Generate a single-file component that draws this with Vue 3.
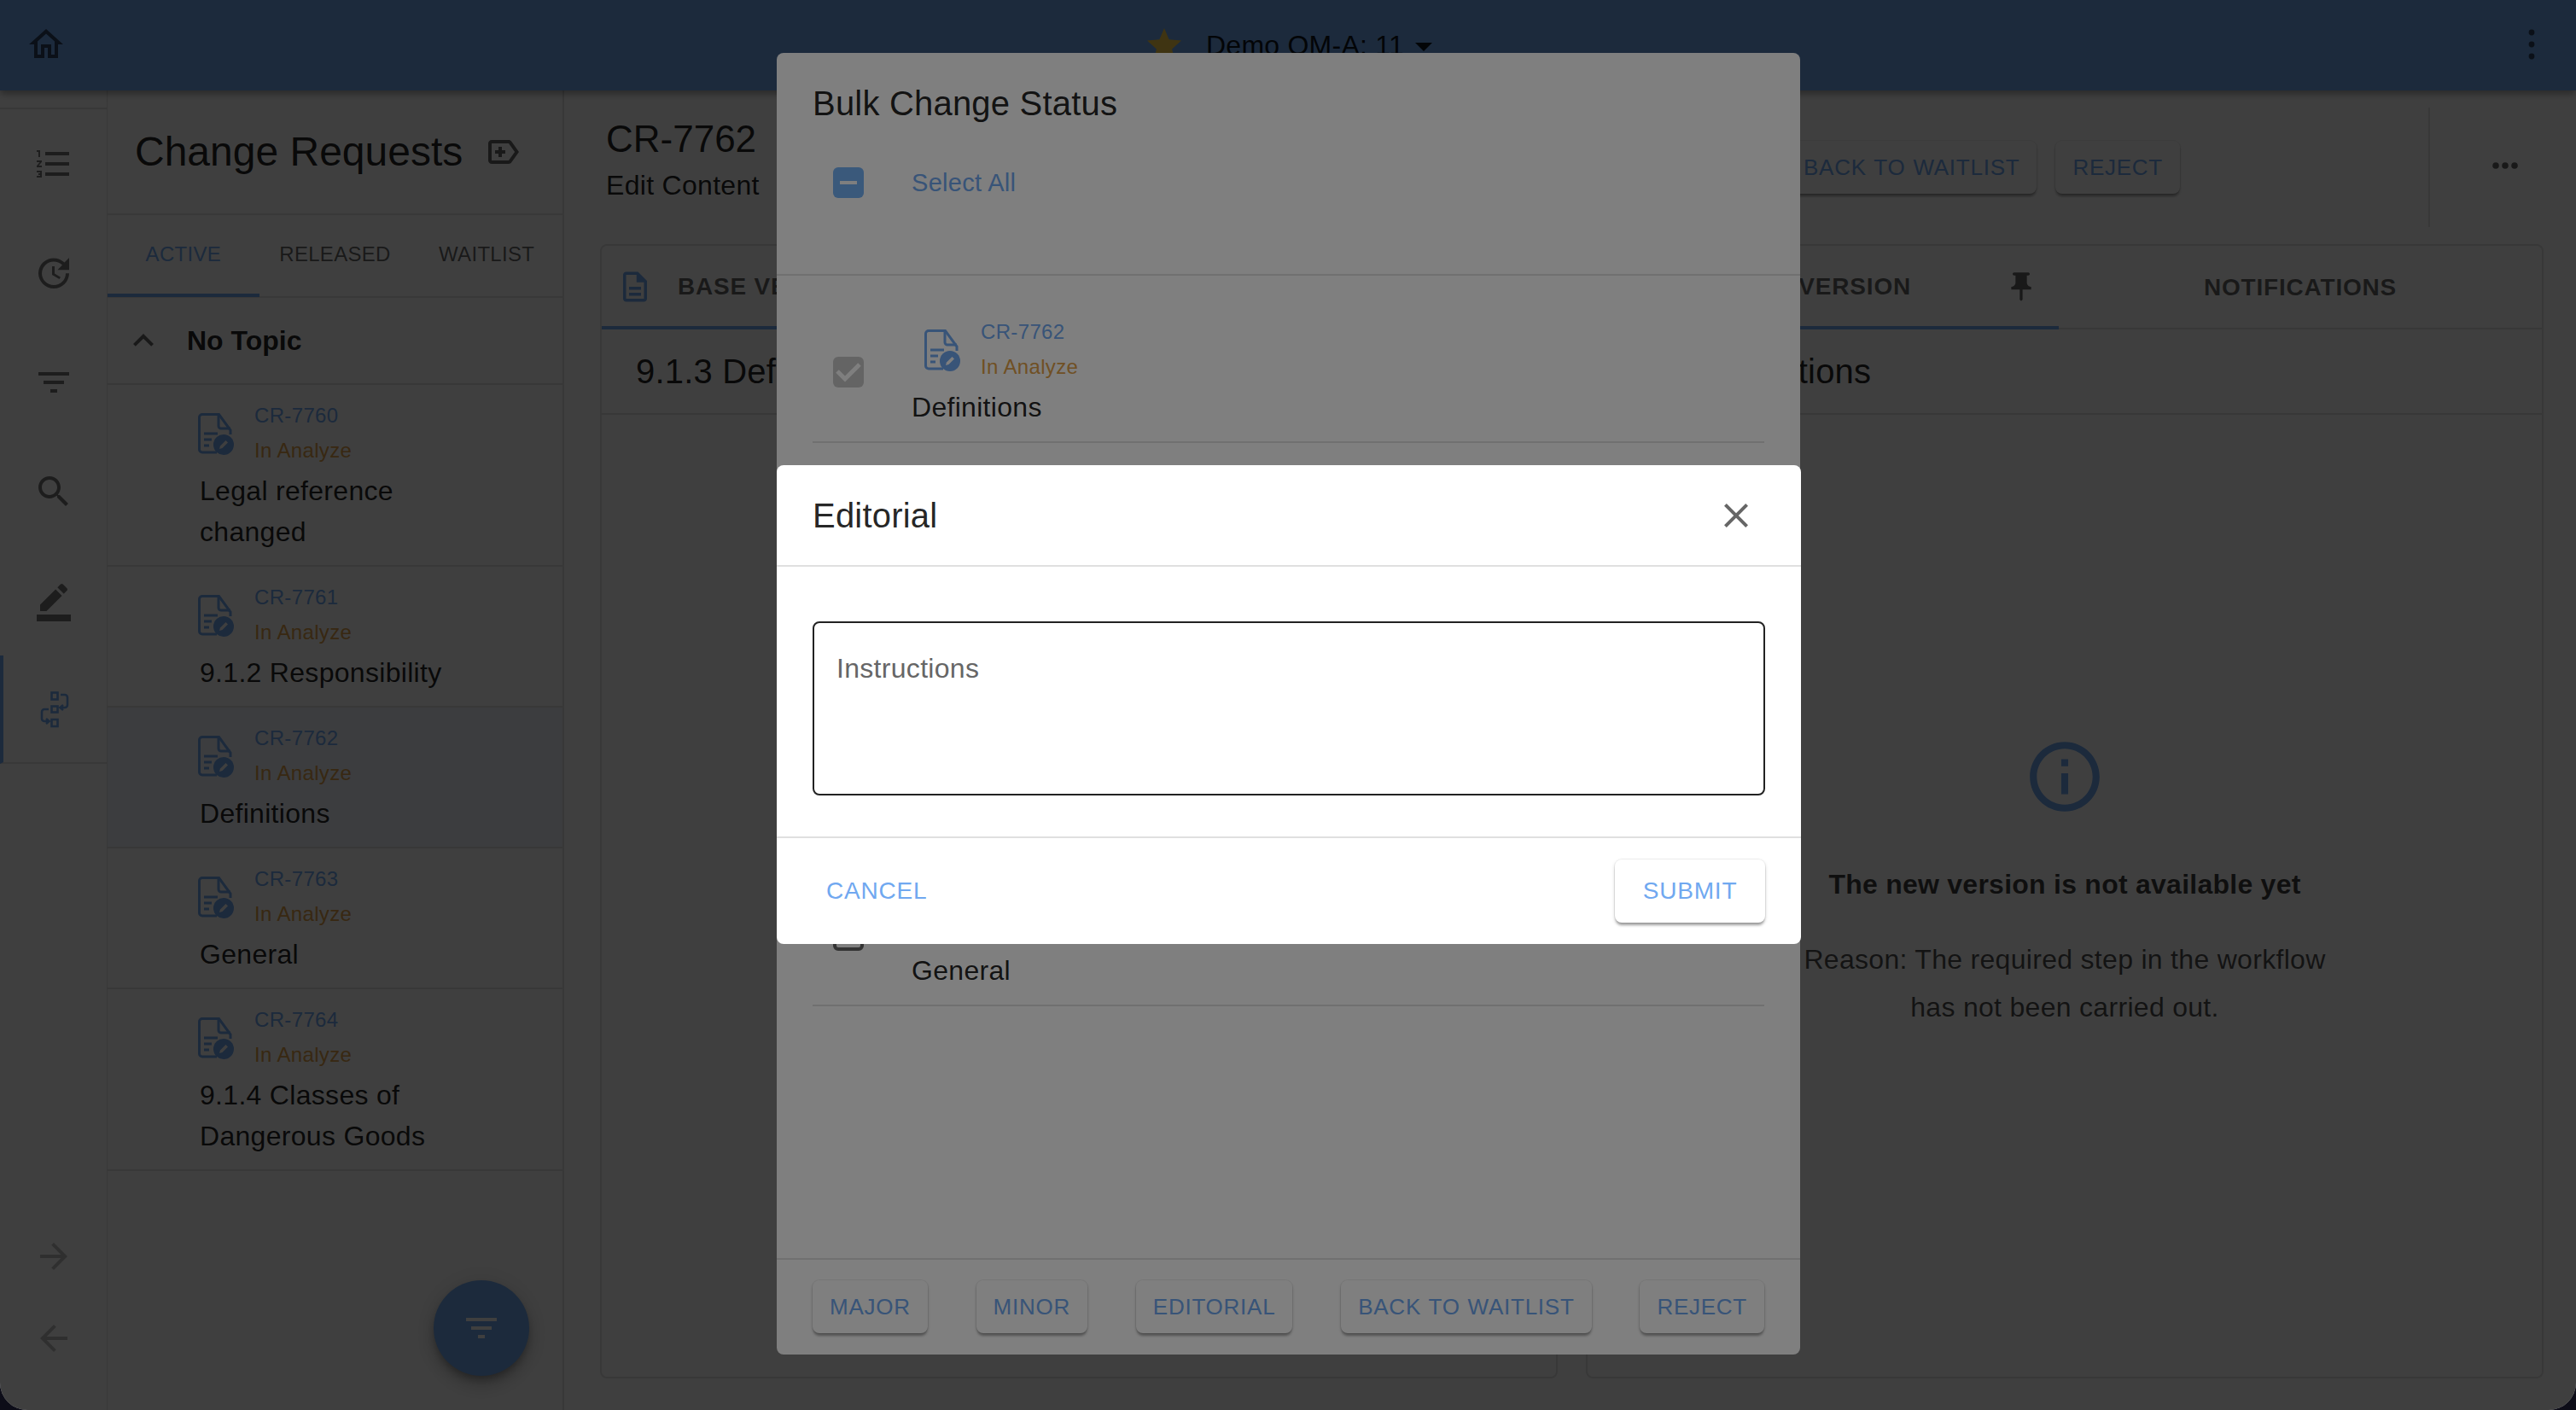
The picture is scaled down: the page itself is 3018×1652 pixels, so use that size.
<script setup>
const railIcons = [
  { d: 'M2 17h2v.5H3v1h1v.5H2v1h3v-4H2v1zm1-9h1V4H2v1h1v3zm-1 3h1.8L2 13.1v.9h3v-1H3.2L5 10.9V10H2v1zm5-6v2h14V5H7zm0 14h14v-2H7v2zm0-6h14v-2H7v2z' },
  { d: 'M21 10.12h-6.78l2.74-2.82c-2.73-2.7-7.15-2.8-9.88-.1-2.73 2.71-2.73 7.08 0 9.79s7.15 2.71 9.88 0C18.32 15.65 19 14.08 19 12.1h2c0 1.98-.88 4.55-2.64 6.29-3.51 3.48-9.21 3.48-12.72 0-3.5-3.47-3.53-9.11-.02-12.58s9.14-3.47 12.65 0L21 3v7.12zM12.5 8v4.25l3.5 2.08-.72 1.21L11 13V8h1.5z' },
  { d: 'M10 18h4v-2h-4v2zM3 6v2h18V6H3zm3 7h12v-2H6v2z' },
  { d: 'M15.5 14h-.79l-.28-.27C15.41 12.59 16 11.11 16 9.5 16 5.91 13.09 3 9.5 3S3 5.91 3 9.5 5.91 16 9.5 16c1.61 0 3.09-.59 4.23-1.57l.27.28v.79l5 4.99L20.49 19l-4.99-5zm-6 0C7.01 14 5 11.99 5 9.5S7.01 5 9.5 5 14 7.01 14 9.5 11.99 14 9.5 14z' },
  { d: 'M22 24H2v-4h20v4zM13.06 5.19l3.75 3.75L7.75 18H4v-3.75l9.06-9.06zm4.82 2.68-3.75-3.75 1.83-1.83c.39-.39 1.02-.39 1.41 0l2.34 2.34c.39.39.39 1.02 0 1.41l-1.83 1.83z' }
]
const requests = [
  { code: 'CR-7760', title: 'Legal reference changed' },
  { code: 'CR-7761', title: '9.1.2 Responsibility' },
  { code: 'CR-7762', title: 'Definitions', selected: true },
  { code: 'CR-7763', title: 'General' },
  { code: 'CR-7764', title: '9.1.4 Classes of Dangerous Goods' }
]
const bulkRows = [
  { code: 'CR-7762', title: 'Definitions', checked: true },
  { code: 'CR-7760', title: 'Legal reference changed' },
  { code: 'CR-7761', title: '9.1.2 Responsibility' },
  { code: 'CR-7764', title: '9.1.4 Classes of Dangerous Goods' },
  { code: 'CR-7763', title: 'General' }
]
const actions = ['MAJOR', 'MINOR', 'EDITORIAL', 'BACK TO WAITLIST', 'REJECT']
</script>

<template>
  <div class="page">
    <header class="topbar">
      <svg class="home" viewBox="0 0 24 24"><path d="M12 5.69l5 4.5V18h-2v-6H9v6H7v-7.81l5-4.5M12 3L2 12h3v8h6v-6h2v6h6v-8h3L12 3z" /></svg>
      <div class="project">
        <svg class="star" viewBox="0 0 24 24"><path d="M12 17.27L18.18 21l-1.64-6.81L22 9.24l-7.19-.61L12 2 9.19 8.63 2 9.24l5.46 4.95L5.82 21z" /></svg>
        <span class="project-name">Demo OM-A: 11</span>
        <span class="caret"></span>
      </div>
      <svg class="kebab" viewBox="0 0 10 40"><circle cx="5" cy="6" r="3.4" /><circle cx="5" cy="20" r="3.4" /><circle cx="5" cy="34" r="3.4" /></svg>
    </header>

    <div class="shell">
      <nav class="rail">
        <div class="rail-top"></div>
        <div v-for="icon in railIcons" :key="icon.d" class="rail-item">
          <svg class="icon48" viewBox="0 0 24 24"><path :d="icon.d" /></svg>
        </div>
        <div class="rail-item rail-active">
          <svg class="icon48 flow" viewBox="0 0 48 48" fill="none">
            <rect x="21.500" y="4.500" width="7" height="8" />
            <rect x="21.500" y="20.500" width="7" height="7" />
            <rect x="21.500" y="36" width="7" height="8" />
            <path d="M32 7h5a3 3 0 0 1 3 3v9a3 3 0 0 1-3 3h-5" />
            <path d="M35 19l-3.500 3 3.500 3" />
            <path d="M18 24h-5a3 3 0 0 0-3 3v8a3 3 0 0 0 3 3h5" />
            <path d="M15 35l3.500 3-3.500 3" />
          </svg>
        </div>
        <div class="rail-bottom">
          <svg class="icon48 faint" viewBox="0 0 24 24"><path d="M12 4l-1.41 1.41L16.17 11H4v2h12.17l-5.58 5.59L12 20l8-8z" /></svg>
          <svg class="icon48 faint" viewBox="0 0 24 24"><path d="M20 11H7.83l5.59-5.59L12 4l-8 8 8 8 1.41-1.41L7.83 13H20v-2z" /></svg>
        </div>
      </nav>

      <aside class="list">
        <div class="list-head">
          <h1 class="list-title">Change Requests</h1>
          <svg class="icon48 label-icon" viewBox="0 0 24 24"><path d="M16.63 5.84C16.27 5.33 15.67 5 15 5H5c-1.1 0-2 .9-2 2v10c0 1.1.9 2 2 2h10c.67 0 1.27-.33 1.63-.84L21 12l-4.37-6.16zM15 17H5V7h10l3.55 5L15 17z" /><path d="M11 9H9v2H7v2h2v2h2v-2h2v-2h-2z" /></svg>
        </div>
        <div class="list-tabs">
          <div class="list-tab tab-on">ACTIVE</div>
          <div class="list-tab">RELEASED</div>
          <div class="list-tab">WAITLIST</div>
        </div>
        <div class="group">
          <svg class="icon48 chevron" viewBox="0 0 24 24"><path d="M12 8l-6 6 1.41 1.41L12 10.83l4.59 4.58L18 14z" /></svg>
          <span class="group-name">No Topic</span>
        </div>
        <div v-for="r in requests" :key="r.code" class="req" :class="{ 'req-on': r.selected }">
          <div class="req-top">
            <svg class="doc" viewBox="0 0 42 49" fill="none">
              <path class="doc-line" d="M22 46H5a3.500 3.500 0 0 1-3.500-3.500V5A3.500 3.500 0 0 1 5 1.500h19.500L38 20v5" />
              <path class="doc-line" d="M24 2v13a3 3 0 0 0 3 3h11" />
              <path class="doc-line" d="M7 24h16M7 31h9M7 38h6" />
              <circle class="doc-badge" cx="30" cy="37" r="12" />
              <path class="doc-pen" d="M25 42l1-3.500 6.500-6.500 2.500 2.500-6.500 6.500z" />
            </svg>
            <div class="req-meta">
              <div class="req-code">{{ r.code }}</div>
              <div class="req-state">In Analyze</div>
            </div>
          </div>
          <div class="req-title">{{ r.title }}</div>
        </div>
        <button class="fab">
          <svg class="icon48 fab-icon" viewBox="0 0 24 24"><path d="M10 18h4v-2h-4v2zM3 6v2h18V6H3zm3 7h12v-2H6v2z" /></svg>
        </button>
      </aside>

      <main class="main">
        <div class="head">
          <div class="head-title">
            <div class="cr-name">CR-7762</div>
            <div class="cr-sub">Edit Content</div>
          </div>
          <div class="head-actions">
            <button v-for="a in actions" :key="a" class="btn">{{ a }}</button>
          </div>
          <div class="head-rule"></div>
          <div class="head-more">
            <svg class="dots" viewBox="0 0 32 10"><circle cx="5" cy="5" r="3.800" /><circle cx="16" cy="5" r="3.800" /><circle cx="27" cy="5" r="3.800" /></svg>
          </div>
        </div>
        <div class="panes">
          <section class="pane">
            <div class="pane-tabs">
              <div class="pane-tab pane-tab-on">
                <svg class="pane-doc" viewBox="0 0 24 24"><path d="M8 16h8v2H8zm0-4h8v2H8zm6-10H6c-1.100 0-2 .9-2 2v16c0 1.100.89 2 1.990 2H18c1.100 0 2-.9 2-2V8l-6-6zm4 18H6V4h7v5h5v11z" /></svg>
                <span>BASE VERSION</span>
              </div>
            </div>
            <div class="pane-heading">9.1.3 Definitions</div>
          </section>
          <section class="pane">
            <div class="pane-tabs">
              <div class="pane-tab pane-tab-on right-tab">
                <span>NEW VERSION</span>
                <svg class="pin" viewBox="0 0 24 24"><path d="M16 9V4h1c.55 0 1-.45 1-1s-.45-1-1-1H7c-.55 0-1 .45-1 1s.45 1 1 1h1v5c0 1.660-1.340 3-3 3v2h5.970v7l1 1 1-1v-7H19v-2c-1.660 0-3-1.340-3-3z" /></svg>
              </div>
              <div class="pane-tab notif">NOTIFICATIONS</div>
            </div>
            <div class="pane-heading heading-right">9.1.3 Definitions</div>
            <div class="notice">
              <svg class="info" viewBox="0 0 24 24"><path d="M11 7h2v2h-2zm0 4h2v6h-2zm1-9C6.480 2 2 6.480 2 12s4.480 10 10 10 10-4.480 10-10S17.520 2 12 2zm0 18c-4.410 0-8-3.590-8-8s3.590-8 8-8 8 3.590 8 8-3.590 8-8 8z" /></svg>
              <div class="notice-title">The new version is not available yet</div>
              <div class="notice-text">Reason: The required step in the workflow<br />has not been carried out.</div>
            </div>
          </section>
        </div>
      </main>
    </div>

    <div class="backdrop bulk-backdrop">
      <div class="bulk">
        <div class="bulk-title">Bulk Change Status</div>
        <div class="select-all">
          <span class="check check-mixed"><span class="dash"></span></span>
          <span class="select-label">Select All</span>
        </div>
        <div class="bulk-list">
          <div v-for="row in bulkRows" :key="row.code" class="bulk-row">
            <span class="check" :class="row.checked ? 'check-on' : 'check-off'">
              <svg v-if="row.checked" class="tick" viewBox="0 0 36 36" fill="none"><path d="M5 17l9 9L31 9" /></svg>
            </span>
            <div class="bulk-body">
              <div class="req-top bulk-top">
                <svg class="doc" viewBox="0 0 42 49" fill="none">
                  <path class="doc-line" d="M22 46H5a3.500 3.500 0 0 1-3.500-3.500V5A3.500 3.500 0 0 1 5 1.500h19.500L38 20v5" />
                  <path class="doc-line" d="M24 2v13a3 3 0 0 0 3 3h11" />
                  <path class="doc-line" d="M7 24h16M7 31h9M7 38h6" />
                  <circle class="doc-badge" cx="30" cy="37" r="12" />
                  <path class="doc-pen" d="M25 42l1-3.500 6.500-6.500 2.500 2.500-6.500 6.500z" />
                </svg>
                <div class="req-meta">
                  <div class="req-code">{{ row.code }}</div>
                  <div class="req-state">In Analyze</div>
                </div>
              </div>
              <div class="req-title bulk-name">{{ row.title }}</div>
            </div>
          </div>
        </div>
        <div class="bulk-foot">
          <button v-for="a in actions" :key="a" class="btn">{{ a }}</button>
        </div>
      </div>
    </div>

    <div class="backdrop edit-backdrop">
      <div class="edit">
        <div class="edit-head">
          <div class="edit-title">Editorial</div>
          <svg class="icon48 close" viewBox="0 0 24 24"><path d="M19 6.410L17.590 5 12 10.590 6.410 5 5 6.410 10.590 12 5 17.590 6.410 19 12 13.410 17.590 19 19 17.590 13.410 12z" /></svg>
        </div>
        <div class="edit-body">
          <textarea class="instructions" placeholder="Instructions"></textarea>
        </div>
        <div class="edit-foot">
          <button class="text-btn">CANCEL</button>
          <button class="submit">SUBMIT</button>
        </div>
      </div>
    </div>
  </div>
</template>

<style>
html, body { margin: 0; background: #0d0d18; }
</style>

<style scoped>
* { box-sizing: border-box; }
.page {
  position: relative; width: 3018px; height: 1652px; overflow: hidden;
  background: #fff; border-radius: 0 0 32px 32px; color: rgba(0,0,0,.87);
  font-family: "Liberation Sans", Arial, sans-serif;
  display: flex; flex-direction: column;
}
button { font-family: inherit; border: 0; cursor: pointer; }

.topbar {
  height: 106px; flex: none; background: #70a8f0; position: relative; z-index: 2;
  display: flex; align-items: center; justify-content: center;
  box-shadow: 0 4px 8px rgba(0,0,0,.35);
}
.home { position: absolute; left: 30px; top: 28px; width: 48px; height: 48px; fill: rgba(0,0,0,.6); }
.project { display: flex; align-items: center; margin-left: 0; }
.star { width: 48px; height: 48px; fill: #ffd24a; margin-right: 25px; }
.project-name { font-size: 32px; line-height: 40px; color: rgba(0,0,0,.9); letter-spacing: .25px; }
.caret { width: 0; height: 0; margin-left: 13px; margin-top: 4px; border: solid transparent; border-width: 10px 10px 0; border-top-color: rgba(0,0,0,.87); }
.kebab { position: absolute; left: 2961px; top: 32px; width: 10px; height: 40px; fill: rgba(0,0,0,.6); }

.shell { flex: 1; display: flex; min-height: 0; }

.rail { width: 126px; flex: none; border-right: 1px solid #e0e0e0; display: flex; flex-direction: column; }
.rail-top { height: 22px; border-bottom: 2px solid #e0e0e0; flex: none; }
.rail-item { height: 128px; flex: none; display: flex; align-items: center; justify-content: center; }
.rail-active { height: 127px; border-left: 4px solid #70a8f0; border-bottom: 2px solid #e0e0e0; padding-right: 4px; }
.icon48 { width: 48px; height: 48px; flex: none; fill: rgba(0,0,0,.54); }
.flow { stroke: #70a8f0; stroke-width: 2.600; fill: none; }
.rail-bottom { margin-top: auto; padding-bottom: 60px; display: flex; flex-direction: column; align-items: center; gap: 48px; }
.faint { fill: rgba(0,0,0,.25); }

.list { position: relative; width: 535px; flex: none; border-right: 2px solid #e0e0e0; }
.list-head { height: 146px; padding-left: 32px; display: flex; align-items: center; gap: 24px; border-bottom: 2px solid #e0e0e0; }
.list-title { margin: 0; font-size: 48px; font-weight: 400; white-space: nowrap; line-height: 60px; }
.label-icon { fill: rgba(0,0,0,.6); }
.list-tabs { height: 97px; display: grid; grid-template-columns: repeat(3, 1fr); border-bottom: 2px solid #e0e0e0; }
.list-tab { font-size: 24px; letter-spacing: .3px; color: rgba(0,0,0,.6); display: flex; align-items: center; justify-content: center; padding-bottom: 4px; }
.tab-on { color: #70a8f0; border-bottom: 4px solid #70a8f0; margin-bottom: -1px; padding-bottom: 0; }
.group { height: 102px; display: flex; align-items: center; padding-left: 18px; gap: 27px; border-bottom: 2px solid #e0e0e0; }
.chevron { fill: rgba(0,0,0,.6); }
.group-name { font-size: 32px; font-weight: 700; }

.req { padding: 15px 90px 15px 106px; border-bottom: 2px solid #e0e0e0; }
.req-on { background: #f0f6ff; }
.req-top { display: flex; gap: 24px; }
.doc { width: 42px; height: 49px; flex: none; margin-top: 18px; }
.doc-line { stroke: #70a8f0; stroke-width: 3; }
.doc-badge { fill: #70a8f0; }
.doc-pen { fill: #fff; }
.req-meta { font-size: 24px; line-height: 41px; letter-spacing: .35px; }
.req-code { color: #70a8f0; }
.req-state { color: #e0a048; }
.req-title { font-size: 32px; line-height: 48px; margin: 3px 0 0 2px; letter-spacing: .3px; }

.fab {
  position: absolute; left: 382px; bottom: 40px; width: 112px; height: 112px; padding: 0;
  border-radius: 50%; background: #70a8f0; display: flex; align-items: center; justify-content: center;
  box-shadow: 0 6px 10px -2px rgba(0,0,0,.3), 0 12px 20px rgba(0,0,0,.14), 0 2px 36px rgba(0,0,0,.12);
}
.fab-icon { fill: #fff; }

.main { flex: 1; min-width: 0; display: flex; flex-direction: column; }
.head { height: 180px; flex: none; display: flex; align-items: center; }
.head-title { padding: 0 0 12px 49px; }
.cr-name { font-size: 44px; line-height: 54px; }
.cr-sub { font-size: 32px; line-height: 54px; letter-spacing: .3px; }
.head-actions { margin-left: auto; display: flex; gap: 22px; }
.btn {
  height: 62px; padding: 0 20px; background: #fff; color: #70a8f0; border-radius: 8px;
  font-size: 26px; letter-spacing: .75px; word-spacing: 1px; white-space: nowrap;
  box-shadow: 0 0 0 1px rgba(0,0,0,.06), 0 4px 3px -1px rgba(0,0,0,.28), 0 2px 4px rgba(0,0,0,.14);
}
.head-rule { width: 2px; height: 140px; background: #e0e0e0; margin-left: 291px; }
.head-more { width: 171px; padding-left: 4px; display: flex; justify-content: center; align-items: center; }
.dots { width: 32px; height: 10px; fill: rgba(0,0,0,.6); margin-top: -4px; }

.panes { flex: 1; min-height: 0; display: grid; grid-template-columns: 1122px 1122px; gap: 33px; padding: 0 0 37px 42px; }
.pane { border: 2px solid #e0e0e0; border-radius: 8px; display: flex; flex-direction: column; }
.pane-tabs { height: 98px; flex: none; display: flex; border-bottom: 2px solid #e0e0e0; }
.pane-tab { font-size: 28px; font-weight: 700; letter-spacing: .8px; color: rgba(0,0,0,.6); display: flex; align-items: center; padding-top: 2px; }
.pane-tab-on { border-bottom: 4px solid #70a8f0; margin-bottom: -2px; }
.pane-tab-on:first-child { width: 552px; }
.pane-doc { width: 42px; height: 42px; fill: #70a8f0; margin: 0 29px 0 18px; }
.right-tab { justify-content: flex-end; padding-right: 24px; gap: 109px; }
.pin { width: 40px; height: 40px; fill: rgba(0,0,0,.6); }
.notif { flex: 1; justify-content: center; }
.pane-heading { height: 100px; flex: none; padding-left: 40px; font-size: 40px; line-height: 98px; letter-spacing: .2px; border-bottom: 2px solid #e0e0e0; }
.heading-right { padding-left: 42px; }
.notice { flex: 1; display: flex; flex-direction: column; align-items: center; padding-top: 375px; }
.info { width: 98px; height: 98px; fill: #70a8f0; }
.notice-title { margin-top: 57px; font-size: 32px; line-height: 40px; font-weight: 700; color: rgba(0,0,0,.75); letter-spacing: .25px; }
.notice-text { margin-top: 40px; font-size: 32px; line-height: 56px; text-align: center; color: rgba(0,0,0,.7); letter-spacing: .3px; }

.backdrop { position: absolute; inset: 0; background: rgba(0,0,0,.5); z-index: 5; }
.edit-backdrop { z-index: 6; }

.bulk {
  position: absolute; left: 910px; top: 62px; width: 1199px; height: 1525px; background: #fff; border-radius: 8px;
  display: flex; flex-direction: column;
}
.bulk-title { padding: 29px 42px 0; font-size: 40px; line-height: 60px; flex: none; letter-spacing: .2px; }
.select-all { margin-top: 27px; height: 72px; padding-left: 66px; display: flex; align-items: center; gap: 56px; flex: none; }
.check { width: 36px; height: 36px; border-radius: 6px; flex: none; display: flex; align-items: center; justify-content: center; }
.check-mixed { background: #74b2f6; }
.dash { width: 20px; height: 4px; background: #fff; }
.check-on { background: #c9c9c9; }
.check-off { border: 4px solid rgba(0,0,0,.6); }
.tick { width: 36px; height: 36px; stroke: #fff; stroke-width: 5; }
.select-label { font-size: 29px; letter-spacing: .3px; color: #70a8f0; }
.bulk-list { flex: 1; min-height: 0; margin-top: 71px; border-top: 2px solid #e0e0e0; padding: 31px 42px 0; }
.bulk-row { height: 165px; display: flex; align-items: center; padding: 0 0 0 24px; gap: 56px; border-bottom: 2px solid #e0e0e0; }
.bulk-body { flex: 1; padding-top: 14px; align-self: flex-start; }
.bulk-top { padding-left: 15px; }
.bulk-name { margin-left: 0; }
.bulk-foot { height: 113px; flex: none; border-top: 2px solid #e0e0e0; padding: 24px 42px 0; display: flex; justify-content: space-between; align-items: flex-start; }

.edit {
  position: absolute; left: 910px; top: 545px; width: 1200px; height: 561px; background: #fff; border-radius: 8px;
  display: flex; flex-direction: column;
}
.edit-head { height: 119px; flex: none; display: flex; align-items: center; justify-content: space-between; padding: 0 52px 0 42px; border-bottom: 2px solid #e0e0e0; }
.edit-title { font-size: 40px; letter-spacing: .2px; padding-top: 2px; }
.close { fill: rgba(0,0,0,.6); }
.edit-body { flex: 1; min-height: 0; padding: 64px 42px 48px; border-bottom: 2px solid #e0e0e0; }
.instructions {
  display: block; width: 100%; height: 204px; padding: 33px 26px; border: 2px solid #222; border-radius: 8px;
  outline: 0; resize: none; font: 32px/40px "Liberation Sans", Arial, sans-serif; letter-spacing: .3px; background: #fff;
}
.instructions::placeholder { color: #666; opacity: 1; }
.edit-foot { height: 124px; flex: none; padding: 0 42px 0 58px; display: flex; align-items: center; justify-content: space-between; }
.text-btn { padding: 0; background: transparent; color: #70a8f0; font-size: 28px; letter-spacing: .8px; }
.submit {
  width: 176px; height: 74px; background: #fff; color: #70a8f0; border-radius: 8px; font-size: 28px; letter-spacing: .8px;
  box-shadow: 0 0 0 1px rgba(0,0,0,.05), 0 4px 3px -1px rgba(0,0,0,.3), 0 2px 5px rgba(0,0,0,.14);
}
</style>
